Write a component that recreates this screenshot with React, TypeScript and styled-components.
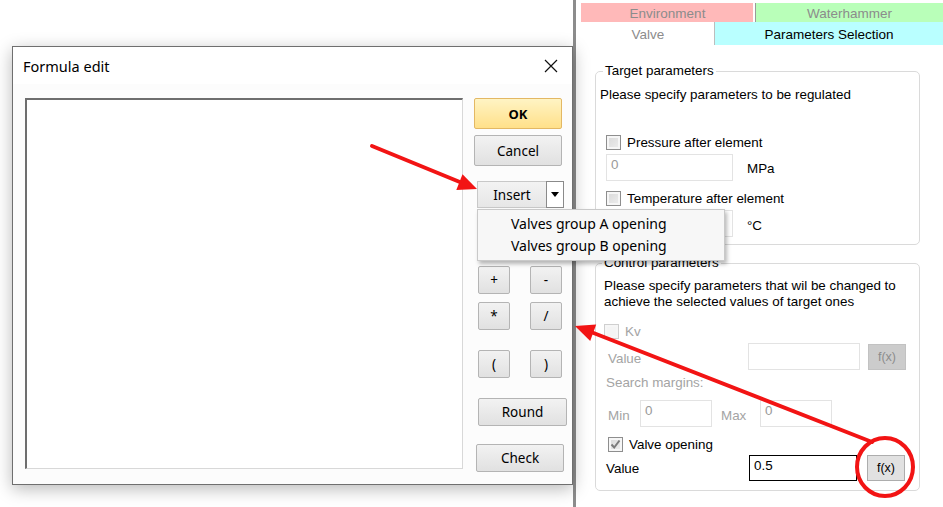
import React from 'react'
import styled, { createGlobalStyle } from 'styled-components'

const GlobalStyle = createGlobalStyle`
  html, body {
    margin: 0;
    padding: 0;
    background: #ffffff;
  }
  body {
    font-family: 'Liberation Sans', Arial, sans-serif;
    overflow: hidden;
  }
`

const Screen = styled.div`
  position: relative;
  display: flex;
  flex-direction: row;
  width: 943px;
  height: 507px;
  overflow: hidden;
  background: #ffffff;
`

const Desktop = styled.div`
  position: relative;
  z-index: 2;
  width: 561px;
  flex: none;
  padding: 46px 0 0 12px;
  background: #ffffff;
`

const Divider = styled.div`
  width: 3px;
  flex: none;
  background: #8c8c8c;
`

/* ---------- dialog ---------- */

const Dialog = styled.div`
  display: flex;
  flex-direction: column;
  width: 559px;
  height: 437px;
  border: 1px solid #6f6f6f;
  background: #fcfcfc;
  box-shadow: 0 4px 16px rgba(0, 0, 0, 0.28);
  font-family: 'Noto Sans', 'Open Sans', sans-serif;
`

const TitleBar = styled.div`
  display: flex;
  align-items: center;
  justify-content: space-between;
  height: 37px;
  padding: 0 14px 0 10px;
  background: #ffffff;
  color: #000;
  font-size: 14.5px;
`

const DialogBody = styled.div`
  display: flex;
  flex-direction: row;
  padding: 14px 0 0 12px;
  gap: 11px;
`

const FormulaArea = styled.div`
  width: 435px;
  height: 368px;
  background: #ffffff;
  border-top: 2px solid #6e6e6e;
  border-left: 2px solid #6e6e6e;
  border-right: 1px solid #d8d8d8;
  border-bottom: 1px solid #d8d8d8;
  box-sizing: content-box;
`

const ButtonColumn = styled.div`
  display: flex;
  flex-direction: column;
  align-items: flex-start;
`

const WinButton = styled.button<{ $w: number; $h?: number; $top?: number; $left?: number; $primary?: boolean }>`
  width: ${p => p.$w}px;
  height: ${p => p.$h ?? 28}px;
  margin: ${p => p.$top ?? 0}px 0 0 ${p => p.$left ?? 0}px;
  padding: 0;
  font-family: 'Noto Sans', 'Open Sans', sans-serif;
  font-size: ${p => (p.$primary ? 13 : 13.5)}px;
  font-weight: ${p => (p.$primary ? 700 : 400)};
  color: #000;
  border-radius: 2px;
  border: 1px solid ${p => (p.$primary ? '#e3b864' : '#b4b4b4')};
  background: ${p =>
    p.$primary
      ? 'linear-gradient(#fff4c4, #ffe08a)'
      : 'linear-gradient(#f2f2f2, #e1e1e1)'};
  box-sizing: border-box;
`

const SplitButton = styled.div`
  position: relative;
  display: flex;
  flex-direction: row;
  margin: 15px 0 0 3px;
  height: 27px;
`

const SplitMain = styled.div`
  display: flex;
  align-items: center;
  justify-content: center;
  width: 69px;
  background: linear-gradient(#f3f3f3, #e6e6e6);
  border: 1px solid #c8c8c8;
  border-right: none;
  font-size: 13.5px;
  box-sizing: border-box;
`

const SplitArrow = styled.div`
  display: flex;
  align-items: center;
  justify-content: center;
  width: 18px;
  background: #ffffff;
  border: 1px solid #8a8a8a;
  box-sizing: border-box;
`

const Menu = styled.div`
  position: absolute;
  top: 28px;
  left: 0;
  width: 248px;
  padding: 3px 0;
  background: #f7f7f7;
  border: 1px solid #c9c9c9;
  box-shadow: 2px 3px 4px rgba(0, 0, 0, 0.28);
  box-sizing: border-box;
`

const MenuItem = styled.div`
  height: 22px;
  line-height: 22px;
  padding-left: 33px;
  font-size: 14px;
  color: #000;
  white-space: nowrap;
`

const OpsGrid = styled.div`
  display: grid;
  grid-template-columns: 32px 32px;
  column-gap: 20px;
  margin: 58px 0 0 4px;
`

const OpButton = styled(WinButton)<{ $gapTop?: number }>`
  margin: ${p => p.$gapTop ?? 0}px 0 0 0;
`

/* ---------- right panel ---------- */

const RightPanel = styled.div`
  position: relative;
  z-index: 1;
  flex: 1;
  display: flex;
  flex-direction: column;
  padding: 3px 0 0 5px;
  background: #ffffff;
  font-size: 13.4px;
  color: #000;
`

const TabRow = styled.div`
  display: flex;
  flex-direction: row;
  height: 19px;
`

const Tab = styled.div<{ $bg: string; $w?: number; $active?: boolean; $line?: string }>`
  display: flex;
  align-items: center;
  justify-content: center;
  padding-top: 1px;
  ${p => (p.$w ? `width: ${p.$w}px;` : 'flex: 1;')}
  background: ${p => p.$bg};
  color: ${p => (p.$active ? '#000' : '#8c8c8c')};
  font-size: 13.5px;
  border-left: 1px solid ${p => p.$line ?? 'transparent'};
  box-sizing: border-box;
`

const TabRowTwo = styled(TabRow)`
  height: 23px;
`

const Group = styled.fieldset<{ $h: number; $top: number }>`
  position: relative;
  width: 325px;
  height: ${p => p.$h}px;
  margin: ${p => p.$top}px 0 0 14px;
  padding: 0;
  border: 1px solid #dadada;
  border-radius: 5px;
  box-sizing: border-box;
`

const Legend = styled.legend<{ $indent: number }>`
  margin-left: ${p => p.$indent}px;
  padding: 0 2px;
  font-size: 13.4px;
  line-height: 14px;
`

const Note = styled.div<{ $left: number; $top: number; $muted?: boolean }>`
  margin: ${p => p.$top}px 0 0 ${p => p.$left}px;
  line-height: 16px;
  color: ${p => (p.$muted ? '#a4a4a4' : '#000')};
`

const CheckRow = styled.label<{ $left: number; $top: number; $disabled?: boolean }>`
  display: flex;
  align-items: center;
  gap: 6px;
  margin: ${p => p.$top}px 0 0 ${p => p.$left}px;
  height: 16px;
  color: ${p => (p.$disabled ? '#a4a4a4' : '#000')};
`

const Box = styled.span<{ $disabled?: boolean }>`
  display: flex;
  align-items: center;
  justify-content: center;
  width: 15px;
  height: 15px;
  border: 1px solid ${p => (p.$disabled ? '#cfcfcf' : '#8e8e8e')};
  background: ${p => (p.$disabled ? '#f4f4f4' : 'linear-gradient(135deg, #d8d8d8, #eeeeee)')};
  box-shadow: inset 0 0 0 2px #f6f6f6;
  box-sizing: border-box;
`

const FieldRow = styled.div<{ $left: number; $top: number }>`
  display: flex;
  flex-direction: row;
  align-items: center;
  margin: ${p => p.$top}px 0 0 ${p => p.$left}px;
`

const Field = styled.div<{ $w: number; $h?: number; $strong?: boolean; $ml?: number }>`
  width: ${p => p.$w}px;
  height: ${p => p.$h ?? 27}px;
  margin-left: ${p => p.$ml ?? 0}px;
  padding: 2px 0 0 4px;
  border: 1px solid ${p => (p.$strong ? '#000' : '#e3e3e3')};
  background: #ffffff;
  color: ${p => (p.$strong ? '#000' : '#9a9a9a')};
  font-size: 13.4px;
  line-height: 16px;
  box-sizing: border-box;
  flex: none;
`

const Caption = styled.span<{ $w?: number; $ml?: number; $muted?: boolean; $dy?: number }>`
  ${p => (p.$w ? `width: ${p.$w}px;` : '')}
  margin-left: ${p => p.$ml ?? 0}px;
  margin-top: ${p => p.$dy ?? 0}px;
  color: ${p => (p.$muted ? '#a4a4a4' : '#000')};
  flex: none;
`

const FxButton = styled.div<{ $disabled?: boolean; $ml?: number }>`
  display: flex;
  align-items: center;
  justify-content: center;
  width: 38px;
  height: 26px;
  margin-left: ${p => p.$ml ?? 8}px;
  background: ${p => (p.$disabled ? '#cccccc' : '#e1e1e1')};
  border: 1px solid ${p => (p.$disabled ? '#c2c2c2' : '#adadad')};
  color: ${p => (p.$disabled ? '#8c8c8c' : '#000')};
  font-size: 12.5px;
  box-sizing: border-box;
  flex: none;
`

const Annotations = styled.svg`
  position: absolute;
  left: 0;
  top: 0;
  z-index: 5;
  pointer-events: none;
`

export default function App() {
  return (
    <>
      <GlobalStyle />
      <Screen>
        <Desktop>
          <Dialog>
            <TitleBar>
              <span>Formula edit</span>
              <svg width="14" height="14" viewBox="0 0 14 14">
                <path d="M1 1L13 13M13 1L1 13" stroke="#111" strokeWidth="1.2" />
              </svg>
            </TitleBar>
            <DialogBody>
              <FormulaArea />
              <ButtonColumn>
                <WinButton $w={88} $h={31} $primary>OK</WinButton>
                <WinButton $w={88} $h={31} $top={6}>Cancel</WinButton>
                <SplitButton>
                  <SplitMain>Insert</SplitMain>
                  <SplitArrow>
                    <svg width="8" height="5" viewBox="0 0 8 5">
                      <path d="M0 0H8L4 5Z" fill="#000" />
                    </svg>
                  </SplitArrow>
                  <Menu>
                    <MenuItem>Valves group A opening</MenuItem>
                    <MenuItem>Valves group B opening</MenuItem>
                  </Menu>
                </SplitButton>
                <OpsGrid>
                  <OpButton $w={32}>+</OpButton>
                  <OpButton $w={32}>-</OpButton>
                  <OpButton $w={32} $gapTop={8}>*</OpButton>
                  <OpButton $w={32} $gapTop={8}>/</OpButton>
                  <OpButton $w={32} $gapTop={20}>(</OpButton>
                  <OpButton $w={32} $gapTop={20}>)</OpButton>
                </OpsGrid>
                <WinButton $w={89} $top={20} $left={4}>Round</WinButton>
                <WinButton $w={88} $top={18} $left={2}>Check</WinButton>
              </ButtonColumn>
            </DialogBody>
          </Dialog>
        </Desktop>
        <Divider />
        <RightPanel>
          <TabRow>
            <Tab $bg="#ffb9b9" $w={172}>Environment</Tab>
            <Tab $bg="#b9ffb9" $line="#9a9a9a" style={{ marginLeft: 2 }}>Waterhammer</Tab>
          </TabRow>
          <TabRowTwo>
            <Tab $bg="#ffffff" $w={133}>Valve</Tab>
            <Tab $bg="#b9ffff" $line="#bdbdbd" $active>Parameters Selection</Tab>
          </TabRowTwo>

          <Group $h={181} $top={19}>
            <Legend $indent={7}>Target parameters</Legend>
            <Note $left={4} $top={9}>Please specify parameters to be regulated</Note>
            <CheckRow $left={10} $top={31}>
              <Box />
              Pressure after element
            </CheckRow>
            <FieldRow $left={10} $top={4}>
              <Field $w={127}>0</Field>
              <Caption $ml={14} $dy={2}>MPa</Caption>
            </FieldRow>
            <CheckRow $left={10} $top={9}>
              <Box />
              Temperature after element
            </CheckRow>
            <FieldRow $left={10} $top={4}>
              <Field $w={127} />
              <Caption $ml={14} $dy={4}>°C</Caption>
            </FieldRow>
          </Group>

          <Group $h={235} $top={11}>
            <Legend $indent={6}>Control parameters</Legend>
            <Note $left={8} $top={8}>
              Please specify parameters that wil be changed to
              <br />
              achieve the selected values of target ones
            </Note>
            <CheckRow $left={8} $top={13} $disabled>
              <Box $disabled />
              Kv
            </CheckRow>
            <FieldRow $left={12} $top={4}>
              <Caption $w={140} $muted $dy={4}>Value</Caption>
              <Field $w={112} $h={27} />
              <FxButton $disabled>f(x)</FxButton>
            </FieldRow>
            <Note $left={10} $top={5} $muted>Search margins:</Note>
            <FieldRow $left={12} $top={9}>
              <Caption $w={32} $muted $dy={4}>Min</Caption>
              <Field $w={72}>0</Field>
              <Caption $w={39} $ml={9} $muted $dy={4}>Max</Caption>
              <Field $w={72}>0</Field>
            </FieldRow>
            <CheckRow $left={12} $top={9}>
              <Box>
                <svg width="11" height="11" viewBox="0 0 11 11">
                  <path d="M1.5 5.5L4.2 8.5L9.5 1.5" stroke="#7a7a7a" strokeWidth="2" fill="none" />
                </svg>
              </Box>
              Valve opening
            </CheckRow>
            <FieldRow $left={10} $top={3}>
              <Caption $w={143}>Value</Caption>
              <Field $w={108} $h={26} $strong>0.5</Field>
              <FxButton $ml={10}>f(x)</FxButton>
            </FieldRow>
          </Group>
        </RightPanel>

        <Annotations width="943" height="507" viewBox="0 0 943 507">
          <line x1="372" y1="146" x2="461" y2="182.5" stroke="#f21414" strokeWidth="4" strokeLinecap="round" />
          <polygon points="477,189 456.3,190 462.5,174.2" fill="#f21414" />
          <line x1="872" y1="442" x2="591" y2="332" stroke="#f21414" strokeWidth="4" strokeLinecap="round" />
          <polygon points="575,326 596.2,324.6 590.2,341" fill="#f21414" />
          <ellipse cx="885" cy="467" rx="28" ry="29" fill="none" stroke="#f21414" strokeWidth="4" />
        </Annotations>
      </Screen>
    </>
  )
}
